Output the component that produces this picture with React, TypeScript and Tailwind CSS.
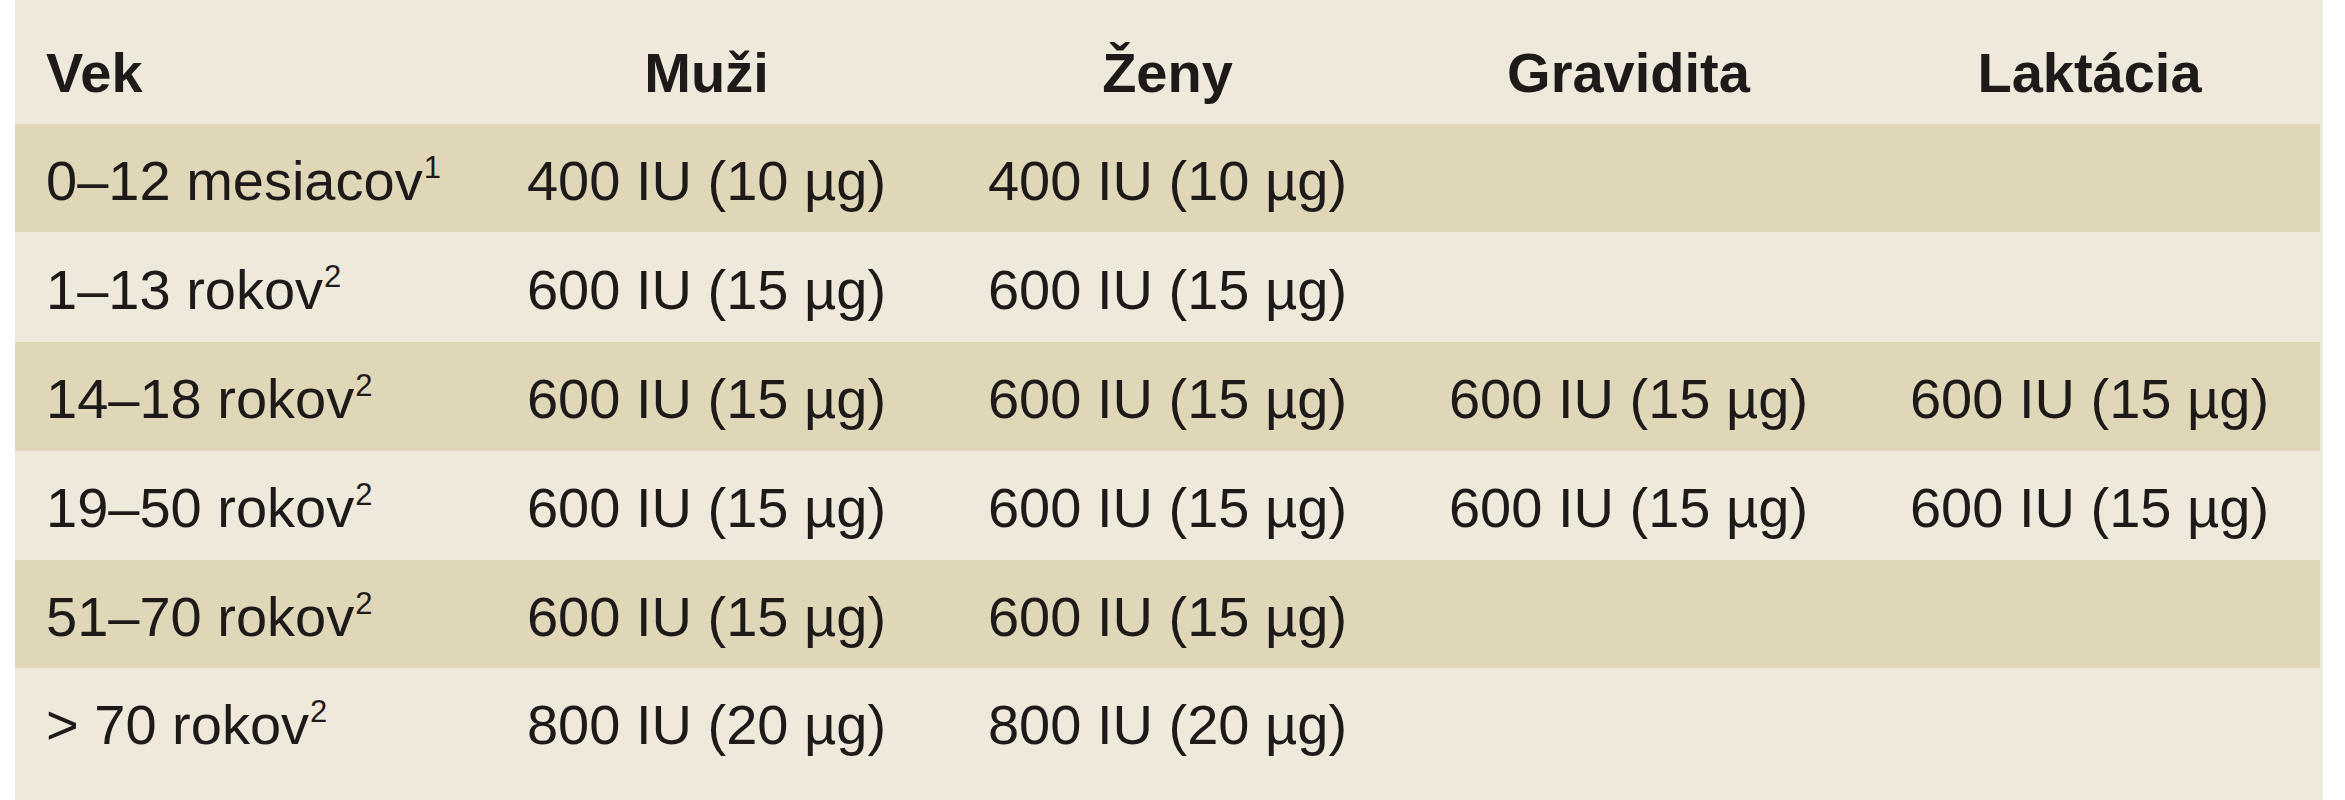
import React from "react";

type Row = { age: string; sup: string; m: string; z: string; g: string; l: string; h: string; shaded: boolean };

const rows: Row[] = [
  { age: "0–12 mesiacov", sup: "1", m: "400 IU (10 µg)", z: "400 IU (10 µg)", g: "", l: "", h: "h-[108px]", shaded: true },
  { age: "1–13 rokov", sup: "2", m: "600 IU (15 µg)", z: "600 IU (15 µg)", g: "", l: "", h: "h-[110px]", shaded: false },
  { age: "14–18 rokov", sup: "2", m: "600 IU (15 µg)", z: "600 IU (15 µg)", g: "600 IU (15 µg)", l: "600 IU (15 µg)", h: "h-[109px]", shaded: true },
  { age: "19–50 rokov", sup: "2", m: "600 IU (15 µg)", z: "600 IU (15 µg)", g: "600 IU (15 µg)", l: "600 IU (15 µg)", h: "h-[109px]", shaded: false },
  { age: "51–70 rokov", sup: "2", m: "600 IU (15 µg)", z: "600 IU (15 µg)", g: "", l: "", h: "h-[108px]", shaded: true },
  { age: "> 70 rokov", sup: "2", m: "800 IU (20 µg)", z: "800 IU (20 µg)", g: "", l: "", h: "h-[109px]", shaded: false },
];

export default function App() {
  return (
    <div className="w-[2345px] h-[800px] bg-white">
      <div
        className="ml-[15px] w-[2308px] h-[800px] bg-[#efe9dc] text-[#1d1a19] text-[56px] leading-none"
        style={{ fontFamily: '"Liberation Sans", Arial, sans-serif' }}
      >
        <div className="grid grid-cols-5 w-[2305px] h-[124px] pt-[45px] font-bold">
          <div className="pl-[31px]">Vek</div>
          <div className="text-center">Muži</div>
          <div className="text-center">Ženy</div>
          <div className="text-center">Gravidita</div>
          <div className="text-center">Laktácia</div>
        </div>
        {rows.map((r, i) => (
          <div
            key={i}
            className={`grid grid-cols-5 w-[2305px] items-center pt-[5px] ${r.h} ${r.shaded ? "bg-[#e0d6b8]" : ""}`}
          >
            <div className="pl-[31px] whitespace-nowrap">
              {r.age}
              <sup className="text-[31px] top-[-22px] ml-[1px]">{r.sup}</sup>
            </div>
            <div className="text-center whitespace-nowrap">{r.m}</div>
            <div className="text-center whitespace-nowrap">{r.z}</div>
            <div className="text-center whitespace-nowrap">{r.g}</div>
            <div className="text-center whitespace-nowrap">{r.l}</div>
          </div>
        ))}
      </div>
    </div>
  );
}
